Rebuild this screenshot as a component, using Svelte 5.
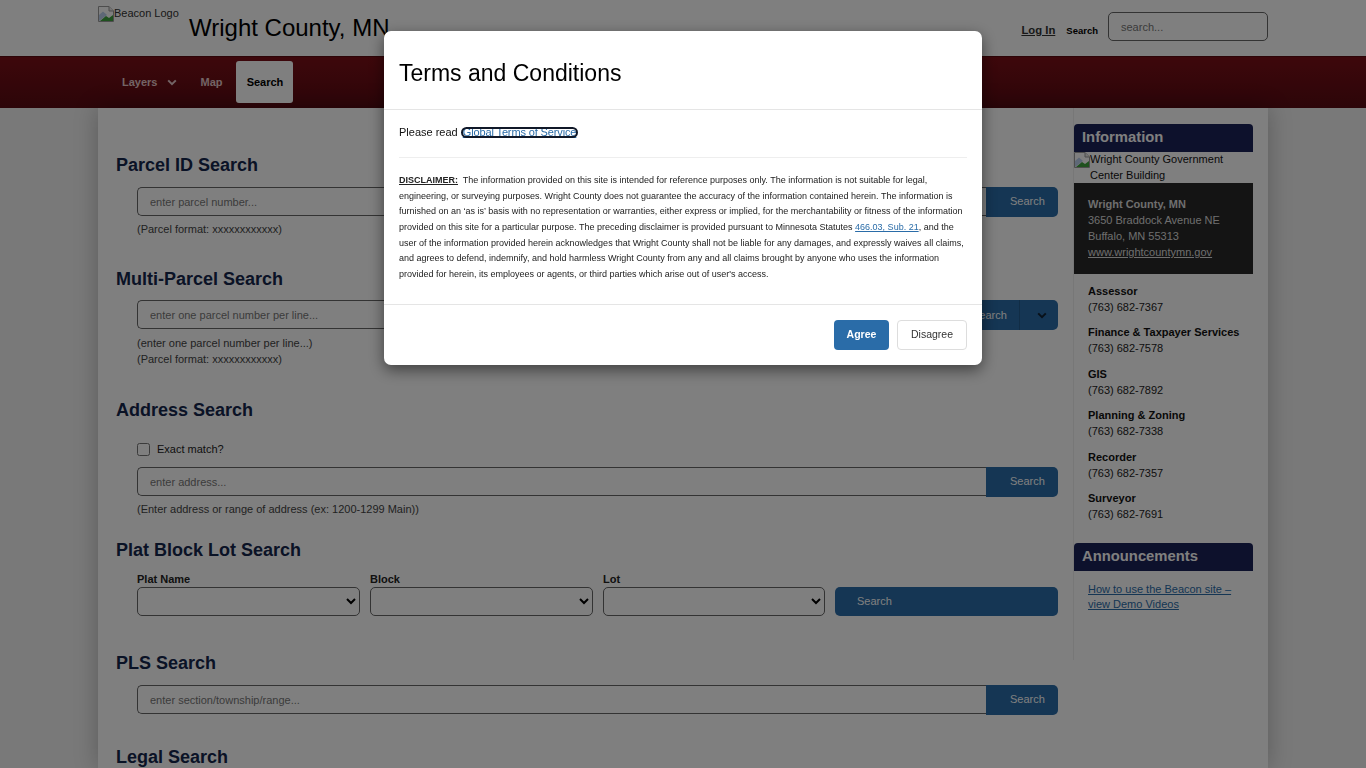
<script>
  const contacts = [
    ["Assessor", "(763) 682-7367"],
    ["Finance & Taxpayer Services", "(763) 682-7578"],
    ["GIS", "(763) 682-7892"],
    ["Planning & Zoning", "(763) 682-7338"],
    ["Recorder", "(763) 682-7357"],
    ["Surveyor", "(763) 682-7691"]
  ];
</script>

{#snippet broken()}
  <svg class="broken" width="16" height="16" viewBox="0 0 16 16">
    <path d="M0.5 0.5H11L15.5 5V15.5H0.5Z" fill="#fff" stroke="#9a9a9a" />
    <path d="M11 0.5V5H15.5" fill="#e8e8e8" stroke="#9a9a9a" />
    <path d="M1 9L5 5.5L9 9L1 15Z" fill="#bcd0ee" />
    <path d="M2 15L8 10L11 12L15 9V15Z" fill="#3fa33f" />
  </svg>
{/snippet}

{#snippet chevron()}
  <svg class="chev" width="10" height="7" viewBox="0 0 10 7">
    <path d="M1.2 1.4L5 5.2L8.8 1.4" fill="none" stroke="currentColor" stroke-width="2" />
  </svg>
{/snippet}

<header class="top">
  <div class="top-inner">
    <div class="logo">{@render broken()}<span>Beacon Logo</span></div>
    <h1>Wright County, MN</h1>
    <div class="top-right">
      <a href="#login" class="login">Log In</a>
      <span class="top-search">Search</span>
      <input class="top-input" placeholder="search..." />
    </div>
  </div>
</header>

<nav class="nav">
  <div class="nav-inner">
    <span class="nav-item layers">Layers {@render chevron()}</span>
    <span class="nav-item">Map</span>
    <span class="nav-item active">Search</span>
  </div>
</nav>

<main class="page">
  <div class="forms">
    <section class="s-parcel">
      <h2>Parcel ID Search</h2>
      <div class="row">
        <input placeholder="enter parcel number..." />
        <button class="go">Search</button>
      </div>
      <p class="help">(Parcel format: xxxxxxxxxxxx)</p>
    </section>

    <section class="s-multi">
      <h2>Multi-Parcel Search</h2>
      <div class="row">
        <input placeholder="enter one parcel number per line..." />
        <button class="go split"><span>Search</span><i>{@render chevron()}</i></button>
      </div>
      <p class="help">(enter one parcel number per line...)<br />(Parcel format: xxxxxxxxxxxx)</p>
    </section>

    <section class="s-address">
      <h2>Address Search</h2>
      <label class="exact"><input type="checkbox" /> Exact match?</label>
      <div class="row">
        <input placeholder="enter address..." />
        <button class="go">Search</button>
      </div>
      <p class="help">(Enter address or range of address (ex: 1200-1299 Main))</p>
    </section>

    <section class="s-plat">
      <h2>Plat Block Lot Search</h2>
      <div class="plat">
        <label>Plat Name<select></select></label>
        <label>Block<select></select></label>
        <label>Lot<select></select></label>
        <button class="wide">Search</button>
      </div>
    </section>

    <section class="s-pls">
      <h2>PLS Search</h2>
      <div class="row">
        <input placeholder="enter section/township/range..." />
        <button class="go">Search</button>
      </div>
    </section>

    <section class="s-legal">
      <h2>Legal Search</h2>
    </section>
  </div>

  <aside class="side">
    <h3>Information</h3>
    <div class="photo">{@render broken()}<span>Wright County Government Center Building</span></div>
    <div class="office">
      <b>Wright County, MN</b><br />
      3650 Braddock Avenue NE<br />
      Buffalo, MN 55313<br />
      <a href="#site">www.wrightcountymn.gov</a>
    </div>
    <ul class="contacts">
      {#each contacts as c}
        <li><b>{c[0]}</b><br />{c[1]}</li>
      {/each}
    </ul>
    <h3 class="second">Announcements</h3>
    <div class="news">
      <a href="#demo">How to use the Beacon site – view Demo Videos</a>
    </div>
  </aside>
</main>

<div class="backdrop">
  <div class="modal">
    <div class="m-head">Terms and Conditions</div>
    <div class="m-body">
      <p class="read">Please read <a href="#terms" class="focused">Global Terms of Service</a></p>
      <hr />
      <p class="legal"><u><b>DISCLAIMER:</b></u>&nbsp; The information provided on this site is intended for reference purposes only. The information is not suitable for legal,<br />engineering, or surveying purposes. Wright County does not guarantee the accuracy of the information contained herein. The information is<br />furnished on an ‘as is’ basis with no representation or warranties, either express or implied, for the merchantability or fitness of the information<br />provided on this site for a particular purpose. The preceding disclaimer is provided pursuant to Minnesota Statutes <a href="#statute">466.03, Sub. 21</a>, and the<br />user of the information provided herein acknowledges that Wright County shall not be liable for any damages, and expressly waives all claims,<br />and agrees to defend, indemnify, and hold harmless Wright County from any and all claims brought by anyone who uses the information<br />provided for herein, its employees or agents, or third parties which arise out of user's access.</p>
    </div>
    <div class="m-foot">
      <button class="agree">Agree</button>
      <button class="disagree">Disagree</button>
    </div>
  </div>
</div>

<style>
  :global(body) {
    margin: 0;
    height: 768px;
    overflow: hidden;
    background: #f2f2f2;
    font-family: "Liberation Sans", Arial, sans-serif;
    font-size: 11px;
    color: #111;
  }
  a {
    color: #2a6ca8;
  }

  .top {
    height: 56px;
    background: #fff;
  }
  .top-inner {
    width: 1170px;
    margin: 0 auto;
    display: flex;
    height: 100%;
  }
  .logo {
    width: 91px;
    padding-top: 6px;
    display: flex;
    align-items: flex-start;
    color: #333;
    line-height: 15px;
    flex-shrink: 0;
  }
  h1 {
    margin: 13px 0 0;
    font-size: 24px;
    line-height: 30px;
    font-weight: 400;
    color: #000;
  }
  .top-right {
    margin-left: auto;
    display: flex;
    align-items: flex-start;
    padding-top: 12px;
  }
  .login {
    margin-top: 12px;
    margin-left: 1px;
    font-size: 11.3px;
    font-weight: 700;
    color: #333;
  }
  .top-search {
    margin: 13px 10px 0 11px;
    font-size: 9.5px;
    font-weight: 700;
    color: #000;
  }
  .top-input {
    width: 160px;
    height: 29px;
    box-sizing: border-box;
    padding: 0 12px;
    border: 1px solid #666;
    border-radius: 5px;
    font: 11px "Liberation Sans", Arial, sans-serif;
  }

  .nav {
    height: 52px;
    background: linear-gradient(#7c0f17, #590b12);
    box-shadow: inset 0 1px 0 #5a0a10;
  }
  .nav-inner {
    width: 1170px;
    margin: 0 auto;
    display: flex;
    align-items: center;
    height: 100%;
    padding-left: 24px;
    box-sizing: border-box;
  }
  .nav-item {
    font-size: 11px;
    font-weight: 700;
    color: #e6c8ca;
  }
  .layers {
    display: flex;
    align-items: center;
    gap: 10px;
    margin-right: 23px;
  }
  .active {
    margin-left: 14px;
    width: 57px;
    height: 42px;
    line-height: 42px;
    text-align: center;
    color: #000;
    background: #fff;
    border-radius: 3px;
  }

  .page {
    width: 1170px;
    height: 660px;
    margin: 0 auto;
    box-sizing: border-box;
    background: #fff;
    box-shadow: 0 0 22px rgba(0, 0, 0, 0.25);
    display: flex;
    gap: 16px;
    padding: 0 15px 0 18px;
  }
  .forms {
    width: 942px;
    flex-shrink: 0;
  }
  section h2 {
    margin: 0 0 11px;
    font-size: 18px;
    line-height: 22px;
    font-weight: 700;
    color: #15264d;
  }
  .s-parcel { padding-top: 46px; }
  .s-multi { padding-top: 31px; }
  .s-address { padding-top: 32px; }
  .s-plat { padding-top: 22px; }
  .s-pls { padding-top: 36px; }
  .s-legal { padding-top: 31px; }

  .s-multi h2 {
    margin-bottom: 10px;
  }
  .row {
    display: flex;
    margin-left: 21px;
    align-items: flex-start;
  }
  .row input {
    flex: 1;
    min-width: 0;
    height: 29px;
    box-sizing: border-box;
    padding: 0 12px;
    border: 1px solid #666;
    border-right: 0;
    border-radius: 5px 0 0 5px;
    font: 11px "Liberation Sans", Arial, sans-serif;
  }
  input::placeholder {
    color: #777;
  }
  .go {
    width: 72px;
    height: 30px;
    padding: 0 0 2px 24px;
    text-align: left;
    border: 0;
    border-radius: 0 5px 5px 0;
    background: #2a6ca8;
    color: #fff;
    font: 11px "Liberation Sans", Arial, sans-serif;
  }
  .split {
    width: 110px;
    display: flex;
    align-items: center;
    padding: 0 0 0 24px;
    justify-content: space-between;
  }
  .split i {
    width: 39px;
    height: 100%;
    flex-shrink: 0;
    box-sizing: border-box;
    padding-left: 5px;
    border-left: 1px solid #235a8c;
    display: flex;
    align-items: center;
    justify-content: center;
    color: #123;
  }
  .help {
    margin: 5px 0 0 21px;
    line-height: 16px;
    color: #444;
  }
  .s-parcel .help,
  .s-address .help {
    margin-top: 4px;
  }
  .exact {
    display: flex;
    align-items: center;
    height: 14px;
    margin: 21px 0 11px 21px;
    gap: 7px;
    color: #222;
  }
  .exact input {
    width: 13px;
    height: 13px;
    margin: 0;
  }
  .s-address h2 {
    margin-bottom: 0;
  }
  .plat {
    display: grid;
    grid-template-columns: 223px 223px 222px 223px;
    column-gap: 10px;
    margin-left: 21px;
    align-items: end;
  }
  .plat label {
    display: block;
    font-weight: 700;
    line-height: 15px;
    color: #222;
    margin-top: -1px;
  }
  .plat select {
    display: block;
    width: 100%;
    height: 29px;
    border: 1px solid #666;
    border-radius: 5px;
    background: #fff;
  }
  .wide {
    height: 29px;
    padding: 0 0 2px 22px;
    text-align: left;
    border: 0;
    border-radius: 5px;
    background: #2a6ca8;
    color: #fff;
    font: 11px "Liberation Sans", Arial, sans-serif;
  }
  .s-plat h2 {
    margin-bottom: 12px;
  }

  .side {
    width: 179px;
    flex-shrink: 0;
    padding-top: 16px;
    height: 536px;
    border-left: 1px solid #eee;
    margin-left: -1px;
  }
  h3 {
    margin: 0;
    height: 28px;
    line-height: 26px;
    padding-left: 8px;
    font-size: 14.8px;
    font-weight: 700;
    color: #fff;
    background: #1a2258;
    border-radius: 4px 4px 0 0;
  }
  .photo {
    display: flex;
    height: 31px;
    font-size: 11px;
    line-height: 16px;
    color: #111;
  }
  .photo span {
    width: 150px;
    margin-top: -1px;
  }
  .office {
    background: #282828;
    color: #ddd;
    padding: 13px 14px 14px;
    line-height: 16px;
    height: 64px;
  }
  .office a {
    color: #ddd;
  }
  .contacts {
    list-style: none;
    margin: 0;
    padding: 10px 0 0 14px;
    line-height: 15.9px;
  }
  .contacts li {
    margin-bottom: 9.6px;
    color: #222;
  }
  .contacts b {
    color: #111;
  }
  .second {
    margin-top: 20px;
    line-height: 27px;
  }
  .news {
    padding: 11px 14px;
    line-height: 15px;
  }

  .backdrop {
    position: fixed;
    inset: 0;
    background: rgba(0, 0, 0, 0.5);
    display: flex;
    justify-content: center;
    align-items: flex-start;
    padding-top: 31px;
  }
  .modal {
    width: 598px;
    height: 334px;
    background: #fff;
    border-radius: 7px;
    box-shadow: 0 5px 15px rgba(0, 0, 0, 0.5);
  }
  .m-head {
    height: 79px;
    box-sizing: border-box;
    padding: 27px 15px 0;
    font-size: 23px;
    line-height: 30px;
    border-bottom: 1px solid #e5e5e5;
    color: #000;
  }
  .m-body {
    height: 195px;
    box-sizing: border-box;
    padding: 14px 15px 0;
    border-bottom: 1px solid #e5e5e5;
  }
  .read {
    margin: 0;
    line-height: 16px;
    color: #111;
  }
  .focused {
    display: inline-block;
    line-height: 7px;
    letter-spacing: -0.13px;
    color: #2a6ca8;
    outline: 2px solid #101828;
    border-radius: 4px;
    margin-left: 2px;
  }
  hr {
    margin: 17px 0 15px;
    border: 0;
    border-top: 1px solid #eee;
  }
  .legal {
    margin: 0;
    font-size: 9px;
    line-height: 15.67px;
    color: #222;
    white-space: nowrap;
  }
  .m-foot {
    display: flex;
    justify-content: flex-end;
    gap: 8px;
    padding: 15px 15px 0;
  }
  .m-foot button {
    height: 30px;
    padding: 0 0 2px;
    border-radius: 4px;
    font: 10.5px "Liberation Sans", Arial, sans-serif;
  }
  .m-foot .agree {
    width: 55px;
    border: 0;
    background: #2a6ca8;
    color: #fff;
    font-weight: 700;
  }
  .disagree {
    width: 70px;
    border: 1px solid #ddd;
    background: #fff;
    color: #333;
  }
</style>
